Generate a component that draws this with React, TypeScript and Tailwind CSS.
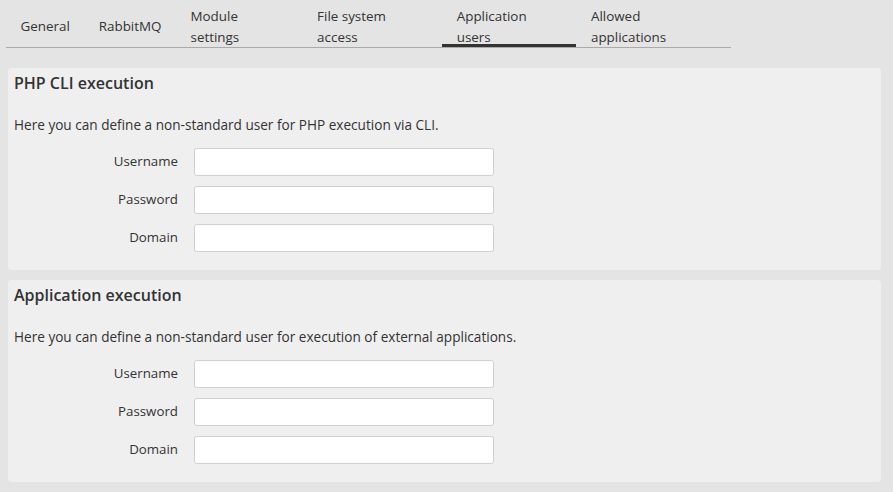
export default function App() {
  const tabs = ["General", "RabbitMQ", "Module settings", "File system access", "Application users", "Allowed applications"];
  const Section = ({ title, desc }: { title: string; desc: string }) => (
    <div className="bg-[#efefef] rounded-[4px] pl-[6px] pt-[4px] pb-[8px] h-[202px]">
      <h2 className="text-[16px] leading-[22px] font-semibold text-[#333] m-0">{title}</h2>
      <p className="text-[13.6px] leading-[18px] text-[#333] mt-[22px]">{desc}</p>
      <div className="mt-[14px] flex flex-col gap-[10px]">
        {["Username", "Password", "Domain"].map((l) => (
          <div key={l} className="flex items-center">
            <label className="w-[180px] text-right text-[13.3px] text-[#333] pr-[16px]">{l}</label>
            <input className="w-[300px] h-[28px] bg-white border border-[#d0d0d0] rounded-[3px]" />
          </div>
        ))}
      </div>
    </div>
  );
  return (
    <div className="w-[893px] h-[492px] bg-[#e4e4e4] overflow-hidden" style={{ fontFamily: "'Open Sans', sans-serif" }}>
      <div className="ml-[6px] mt-[6px] w-[725px] flex border-b border-[#aaa] h-[42px]">
        {tabs.map((t) => (
          <div key={t} className={`px-[14.5px] flex items-center text-[13.4px] text-[#333] h-full ${t === "Application users" ? "border-b-[3px] border-[#333] mb-[-1px] pt-[3px]" : ""}`}>
            {t}
          </div>
        ))}
      </div>
      <div className="mx-[8px] mt-[20px] mr-[12px] flex flex-col gap-[10px]">
        <Section title="PHP CLI execution" desc="Here you can define a non-standard user for PHP execution via CLI." />
        <Section title="Application execution" desc="Here you can define a non-standard user for execution of external applications." />
      </div>
    </div>
  );
}
